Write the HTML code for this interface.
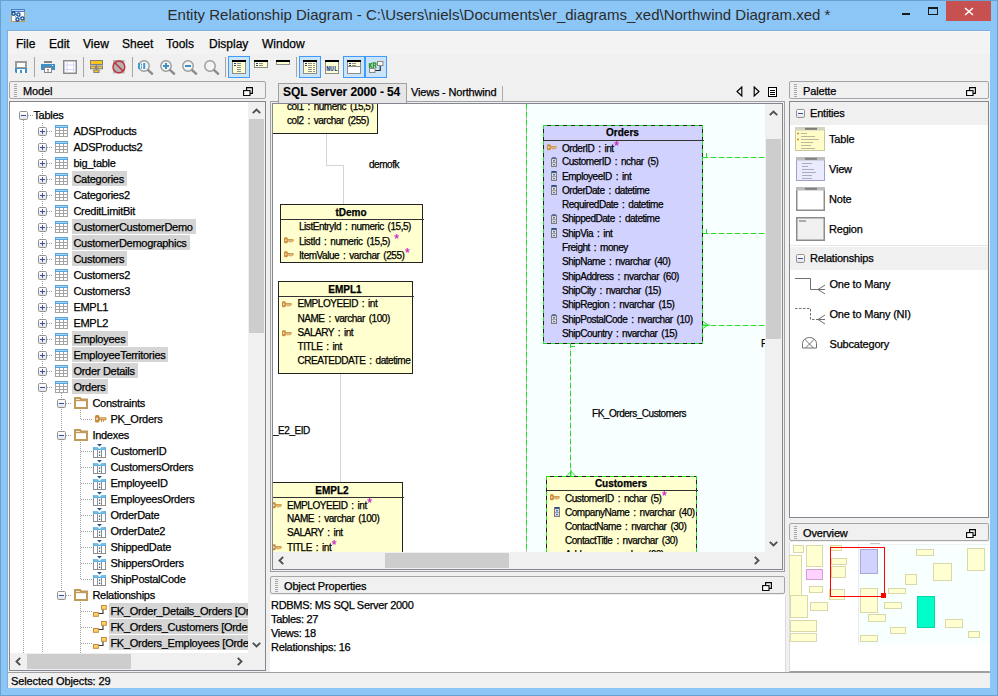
<!DOCTYPE html><html><head><meta charset="utf-8"><style>*{margin:0;padding:0;box-sizing:content-box}
html,body{width:998px;height:696px;overflow:hidden;background:#8cc6f6}
.a{position:absolute}
.t{white-space:pre;font-family:"Liberation Sans",sans-serif;-webkit-text-stroke:0.25px currentColor}
.tr{font-size:11px;line-height:16px;letter-spacing:-0.27px;color:#000}
.dt{font-size:10px;line-height:12px;letter-spacing:-0.46px;word-spacing:1.6px;color:#000}
.pt{font-size:11px;line-height:16px;letter-spacing:-0.2px;color:#000}
</style></head><body>
<div class="a" style="left:0;top:0;width:996px;height:694px;border:1px solid #6b9fd0;background:#8cc6f6"></div>
<svg class="a" style="left:11px;top:9px" width="14" height="13" viewBox="0 0 14 13">
<rect x="0.5" y="0.5" width="13" height="12" fill="#f2f9ff" stroke="#c49a52"/>
<rect x="0" y="0" width="14" height="3" fill="#4f7fbf"/><rect x="1" y="1" width="12" height="1" fill="#a8d4fa"/>
<path d="M2.5 4.5 L11.4 9.4 M2.5 4.5 L6.5 10.5" stroke="#2b5a9a" stroke-width="0.8" stroke-dasharray="0.8 0.8"/>
<circle cx="2.6" cy="4.6" r="1.6" fill="#fff" stroke="#0d4a94" stroke-width="1.3"/>
<circle cx="7.4" cy="5.5" r="1.6" fill="#fff" stroke="#0d4a94" stroke-width="1.3"/>
<circle cx="6.5" cy="10.4" r="1.6" fill="#fff" stroke="#0d4a94" stroke-width="1.3"/>
<circle cx="11.4" cy="9.4" r="1.6" fill="#fff" stroke="#0d4a94" stroke-width="1.3"/>
</svg>
<div class="a t" style="left:0;top:5px;width:998px;text-align:center;font-size:15px;line-height:20px;color:#2b2b2b;-webkit-text-stroke:0">Entity Relationship Diagram - C:\Users\niels\Documents\er_diagrams_xed\Northwind Diagram.xed *</div>
<div class="a" style="left:902px;top:13px;width:8px;height:2px;background:#1a1a1a"></div>
<div class="a" style="left:928px;top:7px;width:8px;height:5px;border:1px solid #1a1a1a;border-top-width:2px"></div>
<div class="a" style="left:946px;top:1px;width:45px;height:20px;background:#c75050"></div>
<svg class="a" style="left:964px;top:7px" width="10" height="9" viewBox="0 0 10 9"><path d="M1 1 L9 8 M9 1 L1 8" stroke="#fff" stroke-width="1.5"/></svg>
<div class="a" style="left:7px;top:30px;width:982px;height:657px;background:#f0f0f0;border-left:1px solid #7eaedb;border-top:1px solid #7eaedb"></div>
<div class="a" style="left:8px;top:31px;width:982px;height:23px;background:#f3f3f3;border-top:1px solid #f9f9f9;box-sizing:border-box"></div>
<div class="a t" style="left:16px;top:36px;font-size:12px;line-height:16px;color:#000">File</div>
<div class="a t" style="left:49px;top:36px;font-size:12px;line-height:16px;color:#000">Edit</div>
<div class="a t" style="left:83px;top:36px;font-size:12px;line-height:16px;color:#000">View</div>
<div class="a t" style="left:122px;top:36px;font-size:12px;line-height:16px;color:#000">Sheet</div>
<div class="a t" style="left:166px;top:36px;font-size:12px;line-height:16px;color:#000">Tools</div>
<div class="a t" style="left:209px;top:36px;font-size:12px;line-height:16px;color:#000">Display</div>
<div class="a t" style="left:262px;top:36px;font-size:12px;line-height:16px;color:#000">Window</div>
<svg class="a" style="left:15px;top:61px" width="12" height="12" viewBox="0 0 12 12">
<path d="M0 0 H12 V12 H1 L0 11 Z" fill="#9b9b9b"/><rect x="0" y="7" width="12" height="5" fill="#3f8fc7"/><path d="M0 11 L1 12 H0Z" fill="#f0f0f0"/>
<rect x="2" y="2" width="8" height="4" fill="#fff"/><rect x="2" y="8" width="8" height="4" fill="#fff"/><rect x="5" y="9" width="2" height="3" fill="#3f8fc7"/></svg>
<div class="a" style="left:34px;top:57px;width:1px;height:20px;background:#a6a6a6"></div>
<svg class="a" style="left:41px;top:61px" width="14" height="12" viewBox="0 0 14 12">
<rect x="3" y="0" width="8" height="2" fill="#858585"/><rect x="0" y="3" width="14" height="6" fill="#3f8fc7"/><rect x="11" y="4" width="1" height="1" fill="#fff"/>
<rect x="3.5" y="6.5" width="7" height="5" fill="#fff" stroke="#858585"/><path d="M6 8.5 H8 M6 10 H8" stroke="#858585"/></svg>
<svg class="a" style="left:63px;top:60px" width="14" height="14" viewBox="0 0 14 14">
<rect x="0.75" y="0.75" width="12.5" height="12.5" fill="#fff" stroke="#8a8a8a" stroke-width="1.5"/>
<path d="M4 1.5 V12.5 M10.5 1.5 V12.5 M1.5 5 H12.5 M1.5 9.5 H12.5" stroke="#d6d6ff" stroke-width="1"/></svg>
<div class="a" style="left:83px;top:57px;width:1px;height:20px;background:#a6a6a6"></div>
<svg class="a" style="left:90px;top:60px" width="13" height="13" viewBox="0 0 13 13">
<path d="M6.5 4 V10.5" stroke="#808080" stroke-width="1.2"/>
<rect x="0.5" y="0.5" width="12" height="4" fill="#fdc21e" stroke="#808080"/>
<rect x="0.5" y="6" width="5" height="2.8" fill="#fdc21e" stroke="#808080"/>
<rect x="7.8" y="6" width="4.7" height="2.8" fill="#fdc21e" stroke="#808080"/>
<rect x="3.8" y="10" width="5.2" height="2.6" fill="#fdc21e" stroke="#808080"/></svg>
<svg class="a" style="left:112px;top:60px" width="14" height="14" viewBox="0 0 14 14">
<rect x="1" y="0" width="11.5" height="13.5" fill="#b4b4b4"/>
<circle cx="6.9" cy="6.9" r="5.9" fill="#b4b4b4" stroke="#c2303a" stroke-width="1.5"/>
<path d="M2.8 2.8 L11 11" stroke="#c2303a" stroke-width="1.5"/></svg>
<div class="a" style="left:132px;top:57px;width:1px;height:20px;background:#a6a6a6"></div>
<svg class="a" style="left:137px;top:59px" width="17" height="17" viewBox="0 0 17 17">
<circle cx="7" cy="7" r="5.2" fill="#fff" fill-opacity="0.3" stroke="#9a9a9a" stroke-width="1.4"/>
<path d="M10.6 10.6 L15.8 15.3" stroke="#8a8a8a" stroke-width="2.4"/><rect x="1" y="4" width="2" height="6" fill="#3f9ad0"/><rect x="4" y="4.6" width="1" height="2" fill="#3f9ad0"/><rect x="4" y="7.4" width="1" height="2" fill="#3f9ad0"/><rect x="6.2" y="4" width="2" height="6" fill="#3f9ad0"/></svg>
<svg class="a" style="left:159px;top:59px" width="17" height="17" viewBox="0 0 17 17">
<circle cx="7" cy="7" r="5.2" fill="#fff" fill-opacity="0.3" stroke="#9a9a9a" stroke-width="1.4"/>
<path d="M10.6 10.6 L15.8 15.3" stroke="#8a8a8a" stroke-width="2.4"/><path d="M4 7 H10 M7 4 V10" stroke="#3f8fc7" stroke-width="2"/></svg>
<svg class="a" style="left:181px;top:59px" width="17" height="17" viewBox="0 0 17 17">
<circle cx="7" cy="7" r="5.2" fill="#fff" fill-opacity="0.3" stroke="#9a9a9a" stroke-width="1.4"/>
<path d="M10.6 10.6 L15.8 15.3" stroke="#8a8a8a" stroke-width="2.4"/><path d="M4 7 H10" stroke="#3f8fc7" stroke-width="2"/></svg>
<svg class="a" style="left:203px;top:59px" width="17" height="17" viewBox="0 0 17 17">
<circle cx="7" cy="7" r="5.2" fill="#fff" fill-opacity="0.3" stroke="#9a9a9a" stroke-width="1.4"/>
<path d="M10.6 10.6 L15.8 15.3" stroke="#8a8a8a" stroke-width="2.4"/></svg>
<div class="a" style="left:225px;top:57px;width:1px;height:20px;background:#a6a6a6"></div>
<div class="a" style="left:228px;top:56px;width:20px;height:20px;border:1px solid #3e9bff;background:#cce4f7"></div>
<svg class="a" style="left:232px;top:60px" width="14" height="14" viewBox="0 0 14 14"><rect x="0.5" y="0.5" width="13" height="13" fill="#ffffd4" stroke="#8c8c8c"/><rect x="0" y="0" width="14" height="2" fill="#000"/><path d="M2 3.5 H4" stroke="#1a3f8c" stroke-width="1"/><path d="M5 3.5 H9" stroke="#909090" stroke-width="1"/><path d="M2 5.5 H4" stroke="#1a3f8c" stroke-width="1"/><path d="M5 5.5 H9" stroke="#909090" stroke-width="1"/><path d="M5 7.5 H9" stroke="#909090" stroke-width="1"/><path d="M5 9.5 H9" stroke="#909090" stroke-width="1"/><path d="M5 11.5 H9" stroke="#909090" stroke-width="1"/></svg>
<svg class="a" style="left:254px;top:60px" width="14" height="8" viewBox="0 0 14 8"><rect x="0.5" y="0.5" width="13" height="7" fill="#ffffd4" stroke="#8c8c8c"/><rect x="0" y="0" width="14" height="2" fill="#000"/><path d="M2 3.5 H4" stroke="#1a3f8c" stroke-width="1"/><path d="M5 3.5 H9" stroke="#909090" stroke-width="1"/><path d="M2 5.5 H4" stroke="#1a3f8c" stroke-width="1"/><path d="M5 5.5 H9" stroke="#909090" stroke-width="1"/></svg>
<svg class="a" style="left:276px;top:60px" width="14" height="5" viewBox="0 0 14 5"><rect x="0.5" y="0.5" width="13" height="4" fill="#ffffd4" stroke="#8c8c8c"/><rect x="0" y="0" width="14" height="2" fill="#000"/></svg>
<div class="a" style="left:296px;top:57px;width:1px;height:20px;background:#a6a6a6"></div>
<div class="a" style="left:299px;top:56px;width:20px;height:20px;border:1px solid #3e9bff;background:#cce4f7"></div>
<svg class="a" style="left:303px;top:60px" width="14" height="14" viewBox="0 0 14 14"><rect x="0.5" y="0.5" width="13" height="13" fill="#ffffd4" stroke="#8c8c8c"/><rect x="0" y="0" width="14" height="2" fill="#000"/><path d="M2 3.5 H4" stroke="#1a3f8c" stroke-width="1"/><path d="M5 3.5 H9" stroke="#909090" stroke-width="1"/><path d="M10 3.5 H12" stroke="#909090" stroke-width="1"/><path d="M2 5.5 H4" stroke="#1a3f8c" stroke-width="1"/><path d="M5 5.5 H9" stroke="#909090" stroke-width="1"/><path d="M10 5.5 H12" stroke="#909090" stroke-width="1"/><path d="M5 7.5 H9" stroke="#909090" stroke-width="1"/><path d="M10 7.5 H12" stroke="#909090" stroke-width="1"/><path d="M5 9.5 H9" stroke="#909090" stroke-width="1"/><path d="M10 9.5 H12" stroke="#909090" stroke-width="1"/><path d="M5 11.5 H9" stroke="#909090" stroke-width="1"/><path d="M10 11.5 H12" stroke="#909090" stroke-width="1"/></svg>
<svg class="a" style="left:325px;top:60px" width="14" height="14" viewBox="0 0 14 14"><rect x="0.5" y="0.5" width="13" height="13" fill="#ffffd4" stroke="#8c8c8c"/><rect x="0" y="0" width="14" height="2" fill="#000"/><text x="7" y="10.5" text-anchor="middle" font-family="Liberation Mono" font-weight="bold" font-size="6.5" fill="#1a3f8c">NUL</text></svg>
<div class="a" style="left:343px;top:56px;width:20px;height:20px;border:1px solid #3e9bff;background:#cce4f7"></div>
<svg class="a" style="left:347px;top:60px" width="14" height="14" viewBox="0 0 14 14"><rect x="0.5" y="0.5" width="13" height="13" fill="#ffffd4" stroke="#8c8c8c"/><rect x="1" y="7" width="12" height="6" fill="#fff"/><path d="M1 6.5 H13" stroke="#8c8c8c"/><rect x="0" y="0" width="14" height="2" fill="#000"/><path d="M2 3.5 H4" stroke="#1a3f8c" stroke-width="1"/><path d="M5 3.5 H9" stroke="#909090" stroke-width="1"/><path d="M2 5.5 H4" stroke="#1a3f8c" stroke-width="1"/><path d="M5 5.5 H9" stroke="#909090" stroke-width="1"/></svg>
<div class="a" style="left:365px;top:56px;width:20px;height:20px;border:1px solid #3e9bff;background:#cce4f7"></div>
<svg class="a" style="left:368px;top:60px" width="16" height="14" viewBox="0 0 16 14">
<path d="M12.2 5.5 V10.5 H6.5" stroke="#2a2a2a" stroke-width="1.2" fill="none"/>
<path d="M1.5 3 V8 M1.5 5.5 L4 3 M2.2 5.2 L4 8 M5.3 8 V3 H7.2 Q8 3 8 4.2 Q8 5.3 7 5.3 H5.3 M6.8 5.3 L8.2 8" fill="none" stroke="#2e962e" stroke-width="1.3"/>
<rect x="9.5" y="1.5" width="5.5" height="4" fill="#f4f4f4" stroke="#8a8a8a"/>
<rect x="1.5" y="8.5" width="5.5" height="4" fill="#f4f4f4" stroke="#8a8a8a"/></svg>
<div class="a" style="left:9px;top:81px;width:255px;height:16px;border:1px solid #a5a5a5;border-radius:2px;background:#f0f0f0"></div>
<div class="a" style="left:14px;top:84px;width:3px;height:13px;background:repeating-linear-gradient(#a8a8a8 0 1px,transparent 1px 2px)"></div>
<div class="a t" style="left:23px;top:83px;font-size:11px;letter-spacing:-0.15px;line-height:16px;color:#000">Model</div>
<svg class="a" style="left:243px;top:87px" width="11" height="9" viewBox="0 0 11 9"><path d="M3.6 3 V0.6 H9.4 V6.4 H7" fill="none" stroke="#000" stroke-width="1.1"/><rect x="0.6" y="3.6" width="6.4" height="5" fill="#fff" stroke="#000" stroke-width="1.1"/></svg>
<div class="a" style="left:9px;top:101px;width:255px;height:568px;border:1px solid #828790;background:#fff"></div>
<div class="a" style="left:270px;top:101px;width:513px;height:469px;border:1px solid #a0a0a0"></div>
<div class="a" style="left:272px;top:103px;width:509px;height:465px;border:1px solid #828790;background:#fff"></div>
<div class="a" style="left:270px;top:576px;width:513px;height:16px;border:1px solid #a5a5a5;border-radius:2px;background:#f0f0f0"></div>
<div class="a" style="left:275px;top:579px;width:3px;height:13px;background:repeating-linear-gradient(#a8a8a8 0 1px,transparent 1px 2px)"></div>
<div class="a t" style="left:284px;top:578px;font-size:11px;letter-spacing:-0.15px;line-height:16px;color:#000">Object Properties</div>
<svg class="a" style="left:762px;top:582px" width="11" height="9" viewBox="0 0 11 9"><path d="M3.6 3 V0.6 H9.4 V6.4 H7" fill="none" stroke="#000" stroke-width="1.1"/><rect x="0.6" y="3.6" width="6.4" height="5" fill="#fff" stroke="#000" stroke-width="1.1"/></svg>
<div class="a" style="left:270px;top:595px;width:514px;height:76px;border:1px solid #a0a0a0;border-left-color:#fff;border-top-color:#fff;border-right-color:#dcdcdc;background:#fff"></div>
<div class="a" style="left:789px;top:81px;width:198px;height:16px;border:1px solid #a5a5a5;border-radius:2px;background:#f0f0f0"></div>
<div class="a" style="left:794px;top:84px;width:3px;height:13px;background:repeating-linear-gradient(#a8a8a8 0 1px,transparent 1px 2px)"></div>
<div class="a t" style="left:803px;top:83px;font-size:11px;letter-spacing:-0.15px;line-height:16px;color:#000">Palette</div>
<svg class="a" style="left:966px;top:87px" width="11" height="9" viewBox="0 0 11 9"><path d="M3.6 3 V0.6 H9.4 V6.4 H7" fill="none" stroke="#000" stroke-width="1.1"/><rect x="0.6" y="3.6" width="6.4" height="5" fill="#fff" stroke="#000" stroke-width="1.1"/></svg>
<div class="a" style="left:789px;top:101px;width:198px;height:415px;border:1px solid #828790;background:#fff"></div>
<div class="a" style="left:789px;top:523px;width:198px;height:16px;border:1px solid #a5a5a5;border-radius:2px;background:#f0f0f0"></div>
<div class="a" style="left:794px;top:526px;width:3px;height:13px;background:repeating-linear-gradient(#a8a8a8 0 1px,transparent 1px 2px)"></div>
<div class="a t" style="left:803px;top:525px;font-size:11px;letter-spacing:-0.15px;line-height:16px;color:#000">Overview</div>
<svg class="a" style="left:966px;top:529px" width="11" height="9" viewBox="0 0 11 9"><path d="M3.6 3 V0.6 H9.4 V6.4 H7" fill="none" stroke="#000" stroke-width="1.1"/><rect x="0.6" y="3.6" width="6.4" height="5" fill="#fff" stroke="#000" stroke-width="1.1"/></svg>
<div class="a" style="left:789px;top:542px;width:200px;height:129px;border-bottom:1px solid #a0a0a0;border-left:1px solid #dcdcdc;background:#fff"></div>
<div class="a" style="left:8px;top:672px;width:982px;height:1px;background:#a0a0a0"></div>
<div class="a t" style="left:11px;top:674px;font-size:11px;letter-spacing:-0.1px;line-height:14px;color:#000">Selected Objects: 29</div>
<div class="a" style="left:10px;top:102px;width:238px;height:551px;overflow:hidden">
<div class="a" style="left:13px;top:18px;width:1px;height:534px;background:repeating-linear-gradient(#a0a0a0 0 1px,transparent 1px 2px)"></div>
<div class="a" style="left:32px;top:21px;width:1px;height:531px;background:repeating-linear-gradient(#a0a0a0 0 1px,transparent 1px 2px)"></div>
<div class="a" style="left:51px;top:291px;width:1px;height:198px;background:repeating-linear-gradient(#a0a0a0 0 1px,transparent 1px 2px)"></div>
<div class="a" style="left:70px;top:308px;width:1px;height:10px;background:repeating-linear-gradient(#a0a0a0 0 1px,transparent 1px 2px)"></div>
<div class="a" style="left:70px;top:340px;width:1px;height:138px;background:repeating-linear-gradient(#a0a0a0 0 1px,transparent 1px 2px)"></div>
<div class="a" style="left:70px;top:500px;width:1px;height:52px;background:repeating-linear-gradient(#a0a0a0 0 1px,transparent 1px 2px)"></div>
<div class="a" style="left:18px;top:13px;width:6px;height:1px;background:repeating-linear-gradient(90deg,#a0a0a0 0 1px,transparent 1px 2px)"></div>
<svg class="a" style="left:9px;top:9px" width="9" height="9" viewBox="0 0 9 9"><defs><linearGradient id="bg" x1="0" y1="0" x2="0" y2="1"><stop offset="0" stop-color="#fff"/><stop offset="1" stop-color="#e3e3e3"/></linearGradient></defs><rect x="0.5" y="0.5" width="8" height="8" rx="1.2" fill="url(#bg)" stroke="#919191"/><path d="M2 4.5 H7" stroke="#3b4fa8" stroke-width="1"/></svg>
<div class="a t tr" style="left:23.4px;top:5px">Tables</div>
<div class="a" style="left:37px;top:29px;width:6px;height:1px;background:repeating-linear-gradient(90deg,#a0a0a0 0 1px,transparent 1px 2px)"></div>
<svg class="a" style="left:28px;top:25px" width="9" height="9" viewBox="0 0 9 9"><defs><linearGradient id="bg" x1="0" y1="0" x2="0" y2="1"><stop offset="0" stop-color="#fff"/><stop offset="1" stop-color="#e3e3e3"/></linearGradient></defs><rect x="0.5" y="0.5" width="8" height="8" rx="1.2" fill="url(#bg)" stroke="#919191"/><path d="M2 4.5 H7" stroke="#3b4fa8" stroke-width="1"/><path d="M4.5 2 V7" stroke="#3b4fa8" stroke-width="1"/></svg>
<svg class="a" style="left:45px;top:23px" width="13" height="12" viewBox="0 0 13 12"><rect x="0.5" y="0.5" width="12" height="11" fill="#fff" stroke="#a3a3a3"/><path d="M0.5 5.5 H12.5 M0.5 8.5 H12.5 M4.5 3 V11.5 M8.5 3 V11.5" stroke="#a3a3a3"/><rect x="0" y="0" width="13" height="3" fill="#54a4dc"/><rect x="1" y="1" width="11" height="1" fill="#a9d8f5"/></svg>
<div class="a t tr" style="left:63.400000000000006px;top:21px">ADSProducts</div>
<div class="a" style="left:37px;top:45px;width:6px;height:1px;background:repeating-linear-gradient(90deg,#a0a0a0 0 1px,transparent 1px 2px)"></div>
<svg class="a" style="left:28px;top:41px" width="9" height="9" viewBox="0 0 9 9"><defs><linearGradient id="bg" x1="0" y1="0" x2="0" y2="1"><stop offset="0" stop-color="#fff"/><stop offset="1" stop-color="#e3e3e3"/></linearGradient></defs><rect x="0.5" y="0.5" width="8" height="8" rx="1.2" fill="url(#bg)" stroke="#919191"/><path d="M2 4.5 H7" stroke="#3b4fa8" stroke-width="1"/><path d="M4.5 2 V7" stroke="#3b4fa8" stroke-width="1"/></svg>
<svg class="a" style="left:45px;top:39px" width="13" height="12" viewBox="0 0 13 12"><rect x="0.5" y="0.5" width="12" height="11" fill="#fff" stroke="#a3a3a3"/><path d="M0.5 5.5 H12.5 M0.5 8.5 H12.5 M4.5 3 V11.5 M8.5 3 V11.5" stroke="#a3a3a3"/><rect x="0" y="0" width="13" height="3" fill="#54a4dc"/><rect x="1" y="1" width="11" height="1" fill="#a9d8f5"/></svg>
<div class="a t tr" style="left:63.400000000000006px;top:37px">ADSProducts2</div>
<div class="a" style="left:37px;top:61px;width:6px;height:1px;background:repeating-linear-gradient(90deg,#a0a0a0 0 1px,transparent 1px 2px)"></div>
<svg class="a" style="left:28px;top:57px" width="9" height="9" viewBox="0 0 9 9"><defs><linearGradient id="bg" x1="0" y1="0" x2="0" y2="1"><stop offset="0" stop-color="#fff"/><stop offset="1" stop-color="#e3e3e3"/></linearGradient></defs><rect x="0.5" y="0.5" width="8" height="8" rx="1.2" fill="url(#bg)" stroke="#919191"/><path d="M2 4.5 H7" stroke="#3b4fa8" stroke-width="1"/><path d="M4.5 2 V7" stroke="#3b4fa8" stroke-width="1"/></svg>
<svg class="a" style="left:45px;top:55px" width="13" height="12" viewBox="0 0 13 12"><rect x="0.5" y="0.5" width="12" height="11" fill="#fff" stroke="#a3a3a3"/><path d="M0.5 5.5 H12.5 M0.5 8.5 H12.5 M4.5 3 V11.5 M8.5 3 V11.5" stroke="#a3a3a3"/><rect x="0" y="0" width="13" height="3" fill="#54a4dc"/><rect x="1" y="1" width="11" height="1" fill="#a9d8f5"/></svg>
<div class="a t tr" style="left:63.400000000000006px;top:53px">big_table</div>
<div class="a" style="left:37px;top:77px;width:6px;height:1px;background:repeating-linear-gradient(90deg,#a0a0a0 0 1px,transparent 1px 2px)"></div>
<svg class="a" style="left:28px;top:73px" width="9" height="9" viewBox="0 0 9 9"><defs><linearGradient id="bg" x1="0" y1="0" x2="0" y2="1"><stop offset="0" stop-color="#fff"/><stop offset="1" stop-color="#e3e3e3"/></linearGradient></defs><rect x="0.5" y="0.5" width="8" height="8" rx="1.2" fill="url(#bg)" stroke="#919191"/><path d="M2 4.5 H7" stroke="#3b4fa8" stroke-width="1"/><path d="M4.5 2 V7" stroke="#3b4fa8" stroke-width="1"/></svg>
<svg class="a" style="left:45px;top:71px" width="13" height="12" viewBox="0 0 13 12"><rect x="0.5" y="0.5" width="12" height="11" fill="#fff" stroke="#a3a3a3"/><path d="M0.5 5.5 H12.5 M0.5 8.5 H12.5 M4.5 3 V11.5 M8.5 3 V11.5" stroke="#a3a3a3"/><rect x="0" y="0" width="13" height="3" fill="#54a4dc"/><rect x="1" y="1" width="11" height="1" fill="#a9d8f5"/></svg>
<div class="a t tr" style="left:62.400000000000006px;top:69px;padding:0 3px 0 1px;height:15px;background:#d5d5d5">Categories</div>
<div class="a" style="left:37px;top:93px;width:6px;height:1px;background:repeating-linear-gradient(90deg,#a0a0a0 0 1px,transparent 1px 2px)"></div>
<svg class="a" style="left:28px;top:89px" width="9" height="9" viewBox="0 0 9 9"><defs><linearGradient id="bg" x1="0" y1="0" x2="0" y2="1"><stop offset="0" stop-color="#fff"/><stop offset="1" stop-color="#e3e3e3"/></linearGradient></defs><rect x="0.5" y="0.5" width="8" height="8" rx="1.2" fill="url(#bg)" stroke="#919191"/><path d="M2 4.5 H7" stroke="#3b4fa8" stroke-width="1"/><path d="M4.5 2 V7" stroke="#3b4fa8" stroke-width="1"/></svg>
<svg class="a" style="left:45px;top:87px" width="13" height="12" viewBox="0 0 13 12"><rect x="0.5" y="0.5" width="12" height="11" fill="#fff" stroke="#a3a3a3"/><path d="M0.5 5.5 H12.5 M0.5 8.5 H12.5 M4.5 3 V11.5 M8.5 3 V11.5" stroke="#a3a3a3"/><rect x="0" y="0" width="13" height="3" fill="#54a4dc"/><rect x="1" y="1" width="11" height="1" fill="#a9d8f5"/></svg>
<div class="a t tr" style="left:63.400000000000006px;top:85px">Categories2</div>
<div class="a" style="left:37px;top:109px;width:6px;height:1px;background:repeating-linear-gradient(90deg,#a0a0a0 0 1px,transparent 1px 2px)"></div>
<svg class="a" style="left:28px;top:105px" width="9" height="9" viewBox="0 0 9 9"><defs><linearGradient id="bg" x1="0" y1="0" x2="0" y2="1"><stop offset="0" stop-color="#fff"/><stop offset="1" stop-color="#e3e3e3"/></linearGradient></defs><rect x="0.5" y="0.5" width="8" height="8" rx="1.2" fill="url(#bg)" stroke="#919191"/><path d="M2 4.5 H7" stroke="#3b4fa8" stroke-width="1"/><path d="M4.5 2 V7" stroke="#3b4fa8" stroke-width="1"/></svg>
<svg class="a" style="left:45px;top:103px" width="13" height="12" viewBox="0 0 13 12"><rect x="0.5" y="0.5" width="12" height="11" fill="#fff" stroke="#a3a3a3"/><path d="M0.5 5.5 H12.5 M0.5 8.5 H12.5 M4.5 3 V11.5 M8.5 3 V11.5" stroke="#a3a3a3"/><rect x="0" y="0" width="13" height="3" fill="#54a4dc"/><rect x="1" y="1" width="11" height="1" fill="#a9d8f5"/></svg>
<div class="a t tr" style="left:63.400000000000006px;top:101px">CreditLimitBit</div>
<div class="a" style="left:37px;top:125px;width:6px;height:1px;background:repeating-linear-gradient(90deg,#a0a0a0 0 1px,transparent 1px 2px)"></div>
<svg class="a" style="left:28px;top:121px" width="9" height="9" viewBox="0 0 9 9"><defs><linearGradient id="bg" x1="0" y1="0" x2="0" y2="1"><stop offset="0" stop-color="#fff"/><stop offset="1" stop-color="#e3e3e3"/></linearGradient></defs><rect x="0.5" y="0.5" width="8" height="8" rx="1.2" fill="url(#bg)" stroke="#919191"/><path d="M2 4.5 H7" stroke="#3b4fa8" stroke-width="1"/><path d="M4.5 2 V7" stroke="#3b4fa8" stroke-width="1"/></svg>
<svg class="a" style="left:45px;top:119px" width="13" height="12" viewBox="0 0 13 12"><rect x="0.5" y="0.5" width="12" height="11" fill="#fff" stroke="#a3a3a3"/><path d="M0.5 5.5 H12.5 M0.5 8.5 H12.5 M4.5 3 V11.5 M8.5 3 V11.5" stroke="#a3a3a3"/><rect x="0" y="0" width="13" height="3" fill="#54a4dc"/><rect x="1" y="1" width="11" height="1" fill="#a9d8f5"/></svg>
<div class="a t tr" style="left:62.400000000000006px;top:117px;padding:0 3px 0 1px;height:15px;background:#d5d5d5">CustomerCustomerDemo</div>
<div class="a" style="left:37px;top:141px;width:6px;height:1px;background:repeating-linear-gradient(90deg,#a0a0a0 0 1px,transparent 1px 2px)"></div>
<svg class="a" style="left:28px;top:137px" width="9" height="9" viewBox="0 0 9 9"><defs><linearGradient id="bg" x1="0" y1="0" x2="0" y2="1"><stop offset="0" stop-color="#fff"/><stop offset="1" stop-color="#e3e3e3"/></linearGradient></defs><rect x="0.5" y="0.5" width="8" height="8" rx="1.2" fill="url(#bg)" stroke="#919191"/><path d="M2 4.5 H7" stroke="#3b4fa8" stroke-width="1"/><path d="M4.5 2 V7" stroke="#3b4fa8" stroke-width="1"/></svg>
<svg class="a" style="left:45px;top:135px" width="13" height="12" viewBox="0 0 13 12"><rect x="0.5" y="0.5" width="12" height="11" fill="#fff" stroke="#a3a3a3"/><path d="M0.5 5.5 H12.5 M0.5 8.5 H12.5 M4.5 3 V11.5 M8.5 3 V11.5" stroke="#a3a3a3"/><rect x="0" y="0" width="13" height="3" fill="#54a4dc"/><rect x="1" y="1" width="11" height="1" fill="#a9d8f5"/></svg>
<div class="a t tr" style="left:62.400000000000006px;top:133px;padding:0 3px 0 1px;height:15px;background:#d5d5d5">CustomerDemographics</div>
<div class="a" style="left:37px;top:157px;width:6px;height:1px;background:repeating-linear-gradient(90deg,#a0a0a0 0 1px,transparent 1px 2px)"></div>
<svg class="a" style="left:28px;top:153px" width="9" height="9" viewBox="0 0 9 9"><defs><linearGradient id="bg" x1="0" y1="0" x2="0" y2="1"><stop offset="0" stop-color="#fff"/><stop offset="1" stop-color="#e3e3e3"/></linearGradient></defs><rect x="0.5" y="0.5" width="8" height="8" rx="1.2" fill="url(#bg)" stroke="#919191"/><path d="M2 4.5 H7" stroke="#3b4fa8" stroke-width="1"/><path d="M4.5 2 V7" stroke="#3b4fa8" stroke-width="1"/></svg>
<svg class="a" style="left:45px;top:151px" width="13" height="12" viewBox="0 0 13 12"><rect x="0.5" y="0.5" width="12" height="11" fill="#fff" stroke="#a3a3a3"/><path d="M0.5 5.5 H12.5 M0.5 8.5 H12.5 M4.5 3 V11.5 M8.5 3 V11.5" stroke="#a3a3a3"/><rect x="0" y="0" width="13" height="3" fill="#54a4dc"/><rect x="1" y="1" width="11" height="1" fill="#a9d8f5"/></svg>
<div class="a t tr" style="left:62.400000000000006px;top:149px;padding:0 3px 0 1px;height:15px;background:#d5d5d5">Customers</div>
<div class="a" style="left:37px;top:173px;width:6px;height:1px;background:repeating-linear-gradient(90deg,#a0a0a0 0 1px,transparent 1px 2px)"></div>
<svg class="a" style="left:28px;top:169px" width="9" height="9" viewBox="0 0 9 9"><defs><linearGradient id="bg" x1="0" y1="0" x2="0" y2="1"><stop offset="0" stop-color="#fff"/><stop offset="1" stop-color="#e3e3e3"/></linearGradient></defs><rect x="0.5" y="0.5" width="8" height="8" rx="1.2" fill="url(#bg)" stroke="#919191"/><path d="M2 4.5 H7" stroke="#3b4fa8" stroke-width="1"/><path d="M4.5 2 V7" stroke="#3b4fa8" stroke-width="1"/></svg>
<svg class="a" style="left:45px;top:167px" width="13" height="12" viewBox="0 0 13 12"><rect x="0.5" y="0.5" width="12" height="11" fill="#fff" stroke="#a3a3a3"/><path d="M0.5 5.5 H12.5 M0.5 8.5 H12.5 M4.5 3 V11.5 M8.5 3 V11.5" stroke="#a3a3a3"/><rect x="0" y="0" width="13" height="3" fill="#54a4dc"/><rect x="1" y="1" width="11" height="1" fill="#a9d8f5"/></svg>
<div class="a t tr" style="left:63.400000000000006px;top:165px">Customers2</div>
<div class="a" style="left:37px;top:189px;width:6px;height:1px;background:repeating-linear-gradient(90deg,#a0a0a0 0 1px,transparent 1px 2px)"></div>
<svg class="a" style="left:28px;top:185px" width="9" height="9" viewBox="0 0 9 9"><defs><linearGradient id="bg" x1="0" y1="0" x2="0" y2="1"><stop offset="0" stop-color="#fff"/><stop offset="1" stop-color="#e3e3e3"/></linearGradient></defs><rect x="0.5" y="0.5" width="8" height="8" rx="1.2" fill="url(#bg)" stroke="#919191"/><path d="M2 4.5 H7" stroke="#3b4fa8" stroke-width="1"/><path d="M4.5 2 V7" stroke="#3b4fa8" stroke-width="1"/></svg>
<svg class="a" style="left:45px;top:183px" width="13" height="12" viewBox="0 0 13 12"><rect x="0.5" y="0.5" width="12" height="11" fill="#fff" stroke="#a3a3a3"/><path d="M0.5 5.5 H12.5 M0.5 8.5 H12.5 M4.5 3 V11.5 M8.5 3 V11.5" stroke="#a3a3a3"/><rect x="0" y="0" width="13" height="3" fill="#54a4dc"/><rect x="1" y="1" width="11" height="1" fill="#a9d8f5"/></svg>
<div class="a t tr" style="left:63.400000000000006px;top:181px">Customers3</div>
<div class="a" style="left:37px;top:205px;width:6px;height:1px;background:repeating-linear-gradient(90deg,#a0a0a0 0 1px,transparent 1px 2px)"></div>
<svg class="a" style="left:28px;top:201px" width="9" height="9" viewBox="0 0 9 9"><defs><linearGradient id="bg" x1="0" y1="0" x2="0" y2="1"><stop offset="0" stop-color="#fff"/><stop offset="1" stop-color="#e3e3e3"/></linearGradient></defs><rect x="0.5" y="0.5" width="8" height="8" rx="1.2" fill="url(#bg)" stroke="#919191"/><path d="M2 4.5 H7" stroke="#3b4fa8" stroke-width="1"/><path d="M4.5 2 V7" stroke="#3b4fa8" stroke-width="1"/></svg>
<svg class="a" style="left:45px;top:199px" width="13" height="12" viewBox="0 0 13 12"><rect x="0.5" y="0.5" width="12" height="11" fill="#fff" stroke="#a3a3a3"/><path d="M0.5 5.5 H12.5 M0.5 8.5 H12.5 M4.5 3 V11.5 M8.5 3 V11.5" stroke="#a3a3a3"/><rect x="0" y="0" width="13" height="3" fill="#54a4dc"/><rect x="1" y="1" width="11" height="1" fill="#a9d8f5"/></svg>
<div class="a t tr" style="left:63.400000000000006px;top:197px">EMPL1</div>
<div class="a" style="left:37px;top:221px;width:6px;height:1px;background:repeating-linear-gradient(90deg,#a0a0a0 0 1px,transparent 1px 2px)"></div>
<svg class="a" style="left:28px;top:217px" width="9" height="9" viewBox="0 0 9 9"><defs><linearGradient id="bg" x1="0" y1="0" x2="0" y2="1"><stop offset="0" stop-color="#fff"/><stop offset="1" stop-color="#e3e3e3"/></linearGradient></defs><rect x="0.5" y="0.5" width="8" height="8" rx="1.2" fill="url(#bg)" stroke="#919191"/><path d="M2 4.5 H7" stroke="#3b4fa8" stroke-width="1"/><path d="M4.5 2 V7" stroke="#3b4fa8" stroke-width="1"/></svg>
<svg class="a" style="left:45px;top:215px" width="13" height="12" viewBox="0 0 13 12"><rect x="0.5" y="0.5" width="12" height="11" fill="#fff" stroke="#a3a3a3"/><path d="M0.5 5.5 H12.5 M0.5 8.5 H12.5 M4.5 3 V11.5 M8.5 3 V11.5" stroke="#a3a3a3"/><rect x="0" y="0" width="13" height="3" fill="#54a4dc"/><rect x="1" y="1" width="11" height="1" fill="#a9d8f5"/></svg>
<div class="a t tr" style="left:63.400000000000006px;top:213px">EMPL2</div>
<div class="a" style="left:37px;top:237px;width:6px;height:1px;background:repeating-linear-gradient(90deg,#a0a0a0 0 1px,transparent 1px 2px)"></div>
<svg class="a" style="left:28px;top:233px" width="9" height="9" viewBox="0 0 9 9"><defs><linearGradient id="bg" x1="0" y1="0" x2="0" y2="1"><stop offset="0" stop-color="#fff"/><stop offset="1" stop-color="#e3e3e3"/></linearGradient></defs><rect x="0.5" y="0.5" width="8" height="8" rx="1.2" fill="url(#bg)" stroke="#919191"/><path d="M2 4.5 H7" stroke="#3b4fa8" stroke-width="1"/><path d="M4.5 2 V7" stroke="#3b4fa8" stroke-width="1"/></svg>
<svg class="a" style="left:45px;top:231px" width="13" height="12" viewBox="0 0 13 12"><rect x="0.5" y="0.5" width="12" height="11" fill="#fff" stroke="#a3a3a3"/><path d="M0.5 5.5 H12.5 M0.5 8.5 H12.5 M4.5 3 V11.5 M8.5 3 V11.5" stroke="#a3a3a3"/><rect x="0" y="0" width="13" height="3" fill="#54a4dc"/><rect x="1" y="1" width="11" height="1" fill="#a9d8f5"/></svg>
<div class="a t tr" style="left:62.400000000000006px;top:229px;padding:0 3px 0 1px;height:15px;background:#d5d5d5">Employees</div>
<div class="a" style="left:37px;top:253px;width:6px;height:1px;background:repeating-linear-gradient(90deg,#a0a0a0 0 1px,transparent 1px 2px)"></div>
<svg class="a" style="left:28px;top:249px" width="9" height="9" viewBox="0 0 9 9"><defs><linearGradient id="bg" x1="0" y1="0" x2="0" y2="1"><stop offset="0" stop-color="#fff"/><stop offset="1" stop-color="#e3e3e3"/></linearGradient></defs><rect x="0.5" y="0.5" width="8" height="8" rx="1.2" fill="url(#bg)" stroke="#919191"/><path d="M2 4.5 H7" stroke="#3b4fa8" stroke-width="1"/><path d="M4.5 2 V7" stroke="#3b4fa8" stroke-width="1"/></svg>
<svg class="a" style="left:45px;top:247px" width="13" height="12" viewBox="0 0 13 12"><rect x="0.5" y="0.5" width="12" height="11" fill="#fff" stroke="#a3a3a3"/><path d="M0.5 5.5 H12.5 M0.5 8.5 H12.5 M4.5 3 V11.5 M8.5 3 V11.5" stroke="#a3a3a3"/><rect x="0" y="0" width="13" height="3" fill="#54a4dc"/><rect x="1" y="1" width="11" height="1" fill="#a9d8f5"/></svg>
<div class="a t tr" style="left:62.400000000000006px;top:245px;padding:0 3px 0 1px;height:15px;background:#d5d5d5">EmployeeTerritories</div>
<div class="a" style="left:37px;top:269px;width:6px;height:1px;background:repeating-linear-gradient(90deg,#a0a0a0 0 1px,transparent 1px 2px)"></div>
<svg class="a" style="left:28px;top:265px" width="9" height="9" viewBox="0 0 9 9"><defs><linearGradient id="bg" x1="0" y1="0" x2="0" y2="1"><stop offset="0" stop-color="#fff"/><stop offset="1" stop-color="#e3e3e3"/></linearGradient></defs><rect x="0.5" y="0.5" width="8" height="8" rx="1.2" fill="url(#bg)" stroke="#919191"/><path d="M2 4.5 H7" stroke="#3b4fa8" stroke-width="1"/><path d="M4.5 2 V7" stroke="#3b4fa8" stroke-width="1"/></svg>
<svg class="a" style="left:45px;top:263px" width="13" height="12" viewBox="0 0 13 12"><rect x="0.5" y="0.5" width="12" height="11" fill="#fff" stroke="#a3a3a3"/><path d="M0.5 5.5 H12.5 M0.5 8.5 H12.5 M4.5 3 V11.5 M8.5 3 V11.5" stroke="#a3a3a3"/><rect x="0" y="0" width="13" height="3" fill="#54a4dc"/><rect x="1" y="1" width="11" height="1" fill="#a9d8f5"/></svg>
<div class="a t tr" style="left:62.400000000000006px;top:261px;padding:0 3px 0 1px;height:15px;background:#d5d5d5">Order Details</div>
<div class="a" style="left:37px;top:285px;width:6px;height:1px;background:repeating-linear-gradient(90deg,#a0a0a0 0 1px,transparent 1px 2px)"></div>
<svg class="a" style="left:28px;top:281px" width="9" height="9" viewBox="0 0 9 9"><defs><linearGradient id="bg" x1="0" y1="0" x2="0" y2="1"><stop offset="0" stop-color="#fff"/><stop offset="1" stop-color="#e3e3e3"/></linearGradient></defs><rect x="0.5" y="0.5" width="8" height="8" rx="1.2" fill="url(#bg)" stroke="#919191"/><path d="M2 4.5 H7" stroke="#3b4fa8" stroke-width="1"/></svg>
<svg class="a" style="left:45px;top:279px" width="13" height="12" viewBox="0 0 13 12"><rect x="0.5" y="0.5" width="12" height="11" fill="#fff" stroke="#a3a3a3"/><path d="M0.5 5.5 H12.5 M0.5 8.5 H12.5 M4.5 3 V11.5 M8.5 3 V11.5" stroke="#a3a3a3"/><rect x="0" y="0" width="13" height="3" fill="#54a4dc"/><rect x="1" y="1" width="11" height="1" fill="#a9d8f5"/></svg>
<div class="a t tr" style="left:62.400000000000006px;top:277px;padding:0 3px 0 1px;height:15px;background:#d5d5d5">Orders</div>
<div class="a" style="left:56px;top:301px;width:6px;height:1px;background:repeating-linear-gradient(90deg,#a0a0a0 0 1px,transparent 1px 2px)"></div>
<svg class="a" style="left:47px;top:297px" width="9" height="9" viewBox="0 0 9 9"><defs><linearGradient id="bg" x1="0" y1="0" x2="0" y2="1"><stop offset="0" stop-color="#fff"/><stop offset="1" stop-color="#e3e3e3"/></linearGradient></defs><rect x="0.5" y="0.5" width="8" height="8" rx="1.2" fill="url(#bg)" stroke="#919191"/><path d="M2 4.5 H7" stroke="#3b4fa8" stroke-width="1"/></svg>
<svg class="a" style="left:64px;top:295px" width="14" height="12" viewBox="0 0 14 12"><path d="M1 1 H6 L7 2.5 H13 V11 H1 Z" fill="#fff" stroke="#c29a5c" stroke-width="2"/><path d="M0 0 H6.3 L7.5 2 H0 Z" fill="#c29a5c"/><path d="M1 3.5 H13" stroke="#c29a5c" stroke-width="1.4"/></svg>
<div class="a t tr" style="left:82.4px;top:293px">Constraints</div>
<div class="a" style="left:71px;top:317px;width:11px;height:1px;background:repeating-linear-gradient(90deg,#a0a0a0 0 1px,transparent 1px 2px)"></div>
<svg class="a" style="left:85px;top:313px" width="12" height="8" viewBox="0 0 12 8"><rect x="0" y="0" width="4.5" height="7.5" rx="1.6" fill="#c58a3a"/><rect x="1.3" y="2.8" width="1.4" height="2" fill="#fff"/><rect x="4" y="2.2" width="7.5" height="3" rx="1.2" fill="#c58a3a"/><rect x="5" y="3.2" width="5.5" height="1" fill="#e8c894"/><path d="M6.5 5 V7 M8.5 5 V6.6" stroke="#c58a3a" stroke-width="1"/></svg>
<div class="a t tr" style="left:100.4px;top:309px">PK_Orders</div>
<div class="a" style="left:56px;top:333px;width:6px;height:1px;background:repeating-linear-gradient(90deg,#a0a0a0 0 1px,transparent 1px 2px)"></div>
<svg class="a" style="left:47px;top:329px" width="9" height="9" viewBox="0 0 9 9"><defs><linearGradient id="bg" x1="0" y1="0" x2="0" y2="1"><stop offset="0" stop-color="#fff"/><stop offset="1" stop-color="#e3e3e3"/></linearGradient></defs><rect x="0.5" y="0.5" width="8" height="8" rx="1.2" fill="url(#bg)" stroke="#919191"/><path d="M2 4.5 H7" stroke="#3b4fa8" stroke-width="1"/></svg>
<svg class="a" style="left:64px;top:327px" width="14" height="12" viewBox="0 0 14 12"><path d="M1 1 H6 L7 2.5 H13 V11 H1 Z" fill="#fff" stroke="#c29a5c" stroke-width="2"/><path d="M0 0 H6.3 L7.5 2 H0 Z" fill="#c29a5c"/><path d="M1 3.5 H13" stroke="#c29a5c" stroke-width="1.4"/></svg>
<div class="a t tr" style="left:82.4px;top:325px">Indexes</div>
<div class="a" style="left:71px;top:349px;width:11px;height:1px;background:repeating-linear-gradient(90deg,#a0a0a0 0 1px,transparent 1px 2px)"></div>
<svg class="a" style="left:83px;top:342px" width="13" height="14" viewBox="0 0 13 14"><rect x="0.5" y="5.5" width="12" height="8" fill="#fff" stroke="#8f8f8f"/><path d="M4.5 5.5 V13.5 M8.5 5.5 V13.5" stroke="#8f8f8f"/><rect x="0" y="3" width="13" height="3" fill="#5db0e4"/><rect x="1" y="3.5" width="11" height="1" fill="#8fcdf2"/><path d="M4.5 3 L6.5 5 L8.5 3 Z" fill="#fff"/><path d="M4 0 H9 L6.5 2.6 Z" fill="#1d4f8c"/><rect x="6" y="7.5" width="1.3" height="1.3" fill="#1d4f8c"/><rect x="6" y="10.6" width="1.3" height="1.3" fill="#1d4f8c"/></svg>
<div class="a t tr" style="left:100.4px;top:341px">CustomerID</div>
<div class="a" style="left:71px;top:365px;width:11px;height:1px;background:repeating-linear-gradient(90deg,#a0a0a0 0 1px,transparent 1px 2px)"></div>
<svg class="a" style="left:83px;top:358px" width="13" height="14" viewBox="0 0 13 14"><rect x="0.5" y="5.5" width="12" height="8" fill="#fff" stroke="#8f8f8f"/><path d="M4.5 5.5 V13.5 M8.5 5.5 V13.5" stroke="#8f8f8f"/><rect x="0" y="3" width="13" height="3" fill="#5db0e4"/><rect x="1" y="3.5" width="11" height="1" fill="#8fcdf2"/><path d="M4.5 3 L6.5 5 L8.5 3 Z" fill="#fff"/><path d="M4 0 H9 L6.5 2.6 Z" fill="#1d4f8c"/><rect x="6" y="7.5" width="1.3" height="1.3" fill="#1d4f8c"/><rect x="6" y="10.6" width="1.3" height="1.3" fill="#1d4f8c"/></svg>
<div class="a t tr" style="left:100.4px;top:357px">CustomersOrders</div>
<div class="a" style="left:71px;top:381px;width:11px;height:1px;background:repeating-linear-gradient(90deg,#a0a0a0 0 1px,transparent 1px 2px)"></div>
<svg class="a" style="left:83px;top:374px" width="13" height="14" viewBox="0 0 13 14"><rect x="0.5" y="5.5" width="12" height="8" fill="#fff" stroke="#8f8f8f"/><path d="M4.5 5.5 V13.5 M8.5 5.5 V13.5" stroke="#8f8f8f"/><rect x="0" y="3" width="13" height="3" fill="#5db0e4"/><rect x="1" y="3.5" width="11" height="1" fill="#8fcdf2"/><path d="M4.5 3 L6.5 5 L8.5 3 Z" fill="#fff"/><path d="M4 0 H9 L6.5 2.6 Z" fill="#1d4f8c"/><rect x="6" y="7.5" width="1.3" height="1.3" fill="#1d4f8c"/><rect x="6" y="10.6" width="1.3" height="1.3" fill="#1d4f8c"/></svg>
<div class="a t tr" style="left:100.4px;top:373px">EmployeeID</div>
<div class="a" style="left:71px;top:397px;width:11px;height:1px;background:repeating-linear-gradient(90deg,#a0a0a0 0 1px,transparent 1px 2px)"></div>
<svg class="a" style="left:83px;top:390px" width="13" height="14" viewBox="0 0 13 14"><rect x="0.5" y="5.5" width="12" height="8" fill="#fff" stroke="#8f8f8f"/><path d="M4.5 5.5 V13.5 M8.5 5.5 V13.5" stroke="#8f8f8f"/><rect x="0" y="3" width="13" height="3" fill="#5db0e4"/><rect x="1" y="3.5" width="11" height="1" fill="#8fcdf2"/><path d="M4.5 3 L6.5 5 L8.5 3 Z" fill="#fff"/><path d="M4 0 H9 L6.5 2.6 Z" fill="#1d4f8c"/><rect x="6" y="7.5" width="1.3" height="1.3" fill="#1d4f8c"/><rect x="6" y="10.6" width="1.3" height="1.3" fill="#1d4f8c"/></svg>
<div class="a t tr" style="left:100.4px;top:389px">EmployeesOrders</div>
<div class="a" style="left:71px;top:413px;width:11px;height:1px;background:repeating-linear-gradient(90deg,#a0a0a0 0 1px,transparent 1px 2px)"></div>
<svg class="a" style="left:83px;top:406px" width="13" height="14" viewBox="0 0 13 14"><rect x="0.5" y="5.5" width="12" height="8" fill="#fff" stroke="#8f8f8f"/><path d="M4.5 5.5 V13.5 M8.5 5.5 V13.5" stroke="#8f8f8f"/><rect x="0" y="3" width="13" height="3" fill="#5db0e4"/><rect x="1" y="3.5" width="11" height="1" fill="#8fcdf2"/><path d="M4.5 3 L6.5 5 L8.5 3 Z" fill="#fff"/><path d="M4 0 H9 L6.5 2.6 Z" fill="#1d4f8c"/><rect x="6" y="7.5" width="1.3" height="1.3" fill="#1d4f8c"/><rect x="6" y="10.6" width="1.3" height="1.3" fill="#1d4f8c"/></svg>
<div class="a t tr" style="left:100.4px;top:405px">OrderDate</div>
<div class="a" style="left:71px;top:429px;width:11px;height:1px;background:repeating-linear-gradient(90deg,#a0a0a0 0 1px,transparent 1px 2px)"></div>
<svg class="a" style="left:83px;top:422px" width="13" height="14" viewBox="0 0 13 14"><rect x="0.5" y="5.5" width="12" height="8" fill="#fff" stroke="#8f8f8f"/><path d="M4.5 5.5 V13.5 M8.5 5.5 V13.5" stroke="#8f8f8f"/><rect x="0" y="3" width="13" height="3" fill="#5db0e4"/><rect x="1" y="3.5" width="11" height="1" fill="#8fcdf2"/><path d="M4.5 3 L6.5 5 L8.5 3 Z" fill="#fff"/><path d="M4 0 H9 L6.5 2.6 Z" fill="#1d4f8c"/><rect x="6" y="7.5" width="1.3" height="1.3" fill="#1d4f8c"/><rect x="6" y="10.6" width="1.3" height="1.3" fill="#1d4f8c"/></svg>
<div class="a t tr" style="left:100.4px;top:421px">OrderDate2</div>
<div class="a" style="left:71px;top:445px;width:11px;height:1px;background:repeating-linear-gradient(90deg,#a0a0a0 0 1px,transparent 1px 2px)"></div>
<svg class="a" style="left:83px;top:438px" width="13" height="14" viewBox="0 0 13 14"><rect x="0.5" y="5.5" width="12" height="8" fill="#fff" stroke="#8f8f8f"/><path d="M4.5 5.5 V13.5 M8.5 5.5 V13.5" stroke="#8f8f8f"/><rect x="0" y="3" width="13" height="3" fill="#5db0e4"/><rect x="1" y="3.5" width="11" height="1" fill="#8fcdf2"/><path d="M4.5 3 L6.5 5 L8.5 3 Z" fill="#fff"/><path d="M4 0 H9 L6.5 2.6 Z" fill="#1d4f8c"/><rect x="6" y="7.5" width="1.3" height="1.3" fill="#1d4f8c"/><rect x="6" y="10.6" width="1.3" height="1.3" fill="#1d4f8c"/></svg>
<div class="a t tr" style="left:100.4px;top:437px">ShippedDate</div>
<div class="a" style="left:71px;top:461px;width:11px;height:1px;background:repeating-linear-gradient(90deg,#a0a0a0 0 1px,transparent 1px 2px)"></div>
<svg class="a" style="left:83px;top:454px" width="13" height="14" viewBox="0 0 13 14"><rect x="0.5" y="5.5" width="12" height="8" fill="#fff" stroke="#8f8f8f"/><path d="M4.5 5.5 V13.5 M8.5 5.5 V13.5" stroke="#8f8f8f"/><rect x="0" y="3" width="13" height="3" fill="#5db0e4"/><rect x="1" y="3.5" width="11" height="1" fill="#8fcdf2"/><path d="M4.5 3 L6.5 5 L8.5 3 Z" fill="#fff"/><path d="M4 0 H9 L6.5 2.6 Z" fill="#1d4f8c"/><rect x="6" y="7.5" width="1.3" height="1.3" fill="#1d4f8c"/><rect x="6" y="10.6" width="1.3" height="1.3" fill="#1d4f8c"/></svg>
<div class="a t tr" style="left:100.4px;top:453px">ShippersOrders</div>
<div class="a" style="left:71px;top:477px;width:11px;height:1px;background:repeating-linear-gradient(90deg,#a0a0a0 0 1px,transparent 1px 2px)"></div>
<svg class="a" style="left:83px;top:470px" width="13" height="14" viewBox="0 0 13 14"><rect x="0.5" y="5.5" width="12" height="8" fill="#fff" stroke="#8f8f8f"/><path d="M4.5 5.5 V13.5 M8.5 5.5 V13.5" stroke="#8f8f8f"/><rect x="0" y="3" width="13" height="3" fill="#5db0e4"/><rect x="1" y="3.5" width="11" height="1" fill="#8fcdf2"/><path d="M4.5 3 L6.5 5 L8.5 3 Z" fill="#fff"/><path d="M4 0 H9 L6.5 2.6 Z" fill="#1d4f8c"/><rect x="6" y="7.5" width="1.3" height="1.3" fill="#1d4f8c"/><rect x="6" y="10.6" width="1.3" height="1.3" fill="#1d4f8c"/></svg>
<div class="a t tr" style="left:100.4px;top:469px">ShipPostalCode</div>
<div class="a" style="left:56px;top:493px;width:6px;height:1px;background:repeating-linear-gradient(90deg,#a0a0a0 0 1px,transparent 1px 2px)"></div>
<svg class="a" style="left:47px;top:489px" width="9" height="9" viewBox="0 0 9 9"><defs><linearGradient id="bg" x1="0" y1="0" x2="0" y2="1"><stop offset="0" stop-color="#fff"/><stop offset="1" stop-color="#e3e3e3"/></linearGradient></defs><rect x="0.5" y="0.5" width="8" height="8" rx="1.2" fill="url(#bg)" stroke="#919191"/><path d="M2 4.5 H7" stroke="#3b4fa8" stroke-width="1"/></svg>
<svg class="a" style="left:64px;top:487px" width="14" height="12" viewBox="0 0 14 12"><path d="M1 1 H6 L7 2.5 H13 V11 H1 Z" fill="#fff" stroke="#c29a5c" stroke-width="2"/><path d="M0 0 H6.3 L7.5 2 H0 Z" fill="#c29a5c"/><path d="M1 3.5 H13" stroke="#c29a5c" stroke-width="1.4"/></svg>
<div class="a t tr" style="left:82.4px;top:485px">Relationships</div>
<div class="a" style="left:71px;top:509px;width:11px;height:1px;background:repeating-linear-gradient(90deg,#a0a0a0 0 1px,transparent 1px 2px)"></div>
<svg class="a" style="left:83px;top:503px" width="14" height="12" viewBox="0 0 14 12"><path d="M10 4 V8.5 H5" stroke="#333" stroke-width="1.1" fill="none"/><rect x="8.5" y="0.5" width="4.8" height="3.8" fill="#fbd46a" stroke="#c58a3a"/><rect x="0.5" y="7.5" width="4.8" height="3.8" fill="#fbd46a" stroke="#c58a3a"/></svg>
<div class="a t tr" style="left:99.4px;top:501px;padding:0 3px 0 1px;height:15px;background:#d5d5d5">FK_Order_Details_Orders [Order Details]</div>
<div class="a" style="left:71px;top:525px;width:11px;height:1px;background:repeating-linear-gradient(90deg,#a0a0a0 0 1px,transparent 1px 2px)"></div>
<svg class="a" style="left:83px;top:519px" width="14" height="12" viewBox="0 0 14 12"><path d="M10 4 V8.5 H5" stroke="#333" stroke-width="1.1" fill="none"/><rect x="8.5" y="0.5" width="4.8" height="3.8" fill="#fbd46a" stroke="#c58a3a"/><rect x="0.5" y="7.5" width="4.8" height="3.8" fill="#fbd46a" stroke="#c58a3a"/></svg>
<div class="a t tr" style="left:99.4px;top:517px;padding:0 3px 0 1px;height:15px;background:#d5d5d5">FK_Orders_Customers [Orders]</div>
<div class="a" style="left:71px;top:541px;width:11px;height:1px;background:repeating-linear-gradient(90deg,#a0a0a0 0 1px,transparent 1px 2px)"></div>
<svg class="a" style="left:83px;top:535px" width="14" height="12" viewBox="0 0 14 12"><path d="M10 4 V8.5 H5" stroke="#333" stroke-width="1.1" fill="none"/><rect x="8.5" y="0.5" width="4.8" height="3.8" fill="#fbd46a" stroke="#c58a3a"/><rect x="0.5" y="7.5" width="4.8" height="3.8" fill="#fbd46a" stroke="#c58a3a"/></svg>
<div class="a t tr" style="left:99.4px;top:533px;padding:0 3px 0 1px;height:15px;background:#d5d5d5">FK_Orders_Employees [Orders]</div>
</div>
<div class="a" style="left:248px;top:102px;width:17px;height:551px;background:#f0f0f0"></div>
<div class="a" style="left:249px;top:119px;width:15px;height:214px;background:#cdcdcd"></div>
<svg class="a" style="left:252.0px;top:108px" width="9" height="6" viewBox="0 0 9 6"><path d="M0.8 5.2 L4.5 1.5 L8.2 5.2" fill="none" stroke="#505050" stroke-width="1.9"/></svg>
<svg class="a" style="left:252.0px;top:642px" width="9" height="6" viewBox="0 0 9 6"><path d="M0.8 0.8 L4.5 4.5 L8.2 0.8" fill="none" stroke="#505050" stroke-width="1.9"/></svg>
<div class="a" style="left:10px;top:653px;width:238px;height:17px;background:#f0f0f0"></div>
<div class="a" style="left:27px;top:654px;width:104px;height:15px;background:#cdcdcd"></div>
<svg class="a" style="left:15px;top:657.0px" width="6" height="9" viewBox="0 0 6 9"><path d="M5.2 0.8 L1.5 4.5 L5.2 8.2" fill="none" stroke="#505050" stroke-width="1.9"/></svg>
<svg class="a" style="left:237px;top:657.0px" width="6" height="9" viewBox="0 0 6 9"><path d="M0.8 0.8 L4.5 4.5 L0.8 8.2" fill="none" stroke="#505050" stroke-width="1.9"/></svg>
<div class="a" style="left:248px;top:653px;width:17px;height:17px;background:#f0f0f0"></div>
<div class="a" style="left:273px;top:104px;width:492px;height:448px;overflow:hidden;background:#fff">
<div class="a" style="left:254px;top:0;width:400px;height:600px;background:#f7ffff"></div>
<div class="a" style="left:253px;top:0;width:1px;height:600px;background:#b8b8b8"></div>
<div class="a" style="left:253px;top:0;width:1px;height:600px;background:repeating-linear-gradient(#22e022 0 5px,transparent 5px 8px)"></div>
<div class="a" style="left:53px;top:29px;width:1px;height:32px;background:#d4d4d4"></div>
<div class="a" style="left:53px;top:61px;width:18px;height:1px;background:#d4d4d4"></div>
<div class="a" style="left:70px;top:61px;width:1px;height:39px;background:#d4d4d4"></div>
<div class="a" style="left:67px;top:269px;width:1px;height:109px;background:#d4d4d4"></div>
<div class="a t dt" style="left:96px;top:55px">demofk</div>
<div class="a t dt" style="left:0px;top:321px">_E2_EID</div>
<div class="a t dt" style="left:319px;top:304px">FK_Orders_Customers</div>
<div class="a t dt" style="left:488px;top:234px">F</div>
<div class="a" style="left:430px;top:53px;width:70px;height:1px;background:#d8d8d8"></div>
<div class="a" style="left:430px;top:53px;width:70px;height:1px;background:repeating-linear-gradient(90deg,#22e022 0 5px,transparent 5px 8px)"></div>
<div class="a" style="left:430px;top:129px;width:70px;height:1px;background:#d8d8d8"></div>
<div class="a" style="left:430px;top:129px;width:70px;height:1px;background:repeating-linear-gradient(90deg,#22e022 0 5px,transparent 5px 8px)"></div>
<div class="a" style="left:430px;top:221px;width:70px;height:1px;background:#d8d8d8"></div>
<div class="a" style="left:430px;top:221px;width:70px;height:1px;background:repeating-linear-gradient(90deg,#22e022 0 5px,transparent 5px 8px)"></div>
<div class="a" style="left:433px;top:49px;width:1px;height:4px;background:#22e022"></div>
<div class="a" style="left:433px;top:125px;width:1px;height:4px;background:#22e022"></div>
<svg class="a" style="left:430px;top:216px" width="8" height="10" viewBox="0 0 8 10"><path d="M0 5 H7 M0 1.5 L5 5 L0 8.5" fill="none" stroke="#22e022" stroke-width="1"/></svg>
<div class="a" style="left:297px;top:239px;width:1px;height:133px;background:#d8d8d8"></div>
<div class="a" style="left:297px;top:239px;width:1px;height:133px;background:repeating-linear-gradient(#22e022 0 5px,transparent 5px 8px)"></div>
<div class="a" style="left:298px;top:242px;width:4px;height:1px;background:#22e022"></div>
<svg class="a" style="left:292px;top:365px" width="12" height="8" viewBox="0 0 12 8"><path d="M1.5 7 L6 2.5 L10.5 7 M6 1 V8" fill="none" stroke="#22e022" stroke-width="1"/></svg>
<div class="a" style="left:-11px;top:-24px;width:114px;height:52px;border:1px solid #222;background:#ffffcf"></div>
<div class="a" style="left:-10px;top:-23px;width:114px;height:52px;overflow:hidden">
<div class="a t dt" style="left:24px;top:20px">col1 : numeric (15,5)</div>
<div class="a t dt" style="left:24px;top:34px">col2 : varchar (255)</div>
</div>
<div class="a" style="left:7px;top:100px;width:141px;height:57px;border:1px solid #222;background:#ffffcf"></div>
<div class="a" style="left:8px;top:115px;width:143px;height:1px;background:#333"></div>
<div class="a t" style="left:7px;top:103px;width:142px;text-align:center;font-size:10px;font-weight:bold;line-height:12px;color:#000">tDemo</div>
<div class="a" style="left:8px;top:101px;width:141px;height:57px;overflow:hidden">
<div class="a t dt" style="left:18px;top:15.5px">ListEntryId : numeric (15,5)</div>
<div class="a t dt" style="left:18px;top:29.5px">ListId : numeric (15,5) <span style="color:#c81ec8;font-size:12px;position:relative;top:-2px;margin-left:0.5px">*</span></div>
<svg class="a" style="left:3px;top:32px" width="10" height="7" viewBox="0 0 10 7"><rect x="0" y="0.3" width="3.8" height="6" rx="1.4" fill="#c98d3c"/><rect x="1.2" y="2.4" width="1.2" height="1.8" fill="#fff6dc"/><rect x="3.3" y="2" width="6.4" height="2.4" rx="1" fill="#c98d3c"/><rect x="4.2" y="2.8" width="4.8" height="0.8" fill="#ecd2a4"/><path d="M6 4.2 V5.6 M8 4.2 V5.3" stroke="#c98d3c" stroke-width="0.9"/></svg>
<div class="a t dt" style="left:18px;top:43.5px">ItemValue : varchar (255)<span style="color:#c81ec8;font-size:12px;position:relative;top:-2px;margin-left:0.5px">*</span></div>
<svg class="a" style="left:3px;top:46px" width="10" height="7" viewBox="0 0 10 7"><rect x="0" y="0.3" width="3.8" height="6" rx="1.4" fill="#c98d3c"/><rect x="1.2" y="2.4" width="1.2" height="1.8" fill="#fff6dc"/><rect x="3.3" y="2" width="6.4" height="2.4" rx="1" fill="#c98d3c"/><rect x="4.2" y="2.8" width="4.8" height="0.8" fill="#ecd2a4"/><path d="M6 4.2 V5.6 M8 4.2 V5.3" stroke="#c98d3c" stroke-width="0.9"/></svg>
</div>
<div class="a" style="left:5px;top:177px;width:133px;height:91px;border:1px solid #222;background:#ffffcf"></div>
<div class="a" style="left:6px;top:192px;width:135px;height:1px;background:#333"></div>
<div class="a t" style="left:5px;top:180px;width:134px;text-align:center;font-size:10px;font-weight:bold;line-height:12px;color:#000">EMPL1</div>
<div class="a" style="left:6px;top:178px;width:133px;height:91px;overflow:hidden">
<div class="a t dt" style="left:18.5px;top:16px">EMPLOYEEID : int</div>
<svg class="a" style="left:3px;top:19px" width="10" height="7" viewBox="0 0 10 7"><rect x="0" y="0.3" width="3.8" height="6" rx="1.4" fill="#c98d3c"/><rect x="1.2" y="2.4" width="1.2" height="1.8" fill="#fff6dc"/><rect x="3.3" y="2" width="6.4" height="2.4" rx="1" fill="#c98d3c"/><rect x="4.2" y="2.8" width="4.8" height="0.8" fill="#ecd2a4"/><path d="M6 4.2 V5.6 M8 4.2 V5.3" stroke="#c98d3c" stroke-width="0.9"/></svg>
<div class="a t dt" style="left:18.5px;top:30.5px">NAME : varchar (100)</div>
<div class="a t dt" style="left:18.5px;top:45px">SALARY : int</div>
<svg class="a" style="left:3px;top:48px" width="10" height="7" viewBox="0 0 10 7"><rect x="0" y="0.3" width="3.8" height="6" rx="1.4" fill="#c98d3c"/><rect x="1.2" y="2.4" width="1.2" height="1.8" fill="#fff6dc"/><rect x="3.3" y="2" width="6.4" height="2.4" rx="1" fill="#c98d3c"/><rect x="4.2" y="2.8" width="4.8" height="0.8" fill="#ecd2a4"/><path d="M6 4.2 V5.6 M8 4.2 V5.3" stroke="#c98d3c" stroke-width="0.9"/></svg>
<div class="a t dt" style="left:18.5px;top:59px">TITLE : int</div>
<div class="a t dt" style="left:18.5px;top:73px">CREATEDDATE : datetime</div>
</div>
<div class="a" style="left:-11px;top:378px;width:139px;height:117px;border:1px solid #222;background:#ffffcf"></div>
<div class="a" style="left:-10px;top:393px;width:141px;height:1px;background:#333"></div>
<div class="a t" style="left:-11px;top:381px;width:140px;text-align:center;font-size:10px;font-weight:bold;line-height:12px;color:#000">EMPL2</div>
<div class="a" style="left:-10px;top:379px;width:139px;height:117px;overflow:hidden">
<div class="a t dt" style="left:24px;top:16px">EMPLOYEEID : int<span style="color:#c81ec8;font-size:12px;position:relative;top:-2px;margin-left:0.5px">*</span></div>
<svg class="a" style="left:9px;top:19px" width="10" height="7" viewBox="0 0 10 7"><rect x="0" y="0.3" width="3.8" height="6" rx="1.4" fill="#c98d3c"/><rect x="1.2" y="2.4" width="1.2" height="1.8" fill="#fff6dc"/><rect x="3.3" y="2" width="6.4" height="2.4" rx="1" fill="#c98d3c"/><rect x="4.2" y="2.8" width="4.8" height="0.8" fill="#ecd2a4"/><path d="M6 4.2 V5.6 M8 4.2 V5.3" stroke="#c98d3c" stroke-width="0.9"/></svg>
<div class="a t dt" style="left:24px;top:30px">NAME : varchar (100)</div>
<div class="a t dt" style="left:24px;top:44px">SALARY : int</div>
<div class="a t dt" style="left:24px;top:58px">TITLE : int<span style="color:#c81ec8;font-size:12px;position:relative;top:-2px;margin-left:0.5px">*</span></div>
<svg class="a" style="left:9px;top:61px" width="10" height="7" viewBox="0 0 10 7"><rect x="0" y="0.3" width="3.8" height="6" rx="1.4" fill="#c98d3c"/><rect x="1.2" y="2.4" width="1.2" height="1.8" fill="#fff6dc"/><rect x="3.3" y="2" width="6.4" height="2.4" rx="1" fill="#c98d3c"/><rect x="4.2" y="2.8" width="4.8" height="0.8" fill="#ecd2a4"/><path d="M6 4.2 V5.6 M8 4.2 V5.3" stroke="#c98d3c" stroke-width="0.9"/></svg>
</div>
<div class="a" style="left:270px;top:21px;width:158px;height:217px;border:1px solid #222;background:#d2d2fe"></div>
<div class="a" style="left:270px;top:21px;width:160px;height:1px;background:repeating-linear-gradient(90deg,#22e022 0 4px,transparent 4px 8px)"></div>
<div class="a" style="left:270px;top:239px;width:160px;height:1px;background:repeating-linear-gradient(90deg,#22e022 0 4px,transparent 4px 8px)"></div>
<div class="a" style="left:270px;top:21px;width:1px;height:219px;background:repeating-linear-gradient(#22e022 0 4px,transparent 4px 8px)"></div>
<div class="a" style="left:429px;top:21px;width:1px;height:219px;background:repeating-linear-gradient(#22e022 0 4px,transparent 4px 8px)"></div>
<div class="a" style="left:271px;top:36px;width:160px;height:1px;background:#333"></div>
<div class="a t" style="left:270px;top:23px;width:159px;text-align:center;font-size:10px;font-weight:bold;line-height:12px;color:#000">Orders</div>
<div class="a" style="left:271px;top:22px;width:158px;height:217px;overflow:hidden">
<div class="a t dt" style="left:18px;top:16.0px">OrderID : int<span style="color:#c81ec8;font-size:12px;position:relative;top:-2px;margin-left:0.5px">*</span></div>
<svg class="a" style="left:3px;top:18px" width="10" height="7" viewBox="0 0 10 7"><rect x="0" y="0.3" width="3.8" height="6" rx="1.4" fill="#c98d3c"/><rect x="1.2" y="2.4" width="1.2" height="1.8" fill="#fff6dc"/><rect x="3.3" y="2" width="6.4" height="2.4" rx="1" fill="#c98d3c"/><rect x="4.2" y="2.8" width="4.8" height="0.8" fill="#ecd2a4"/><path d="M6 4.2 V5.6 M8 4.2 V5.3" stroke="#c98d3c" stroke-width="0.9"/></svg>
<div class="a t dt" style="left:18px;top:30.30000000000001px">CustomerID : nchar (5)</div>
<svg class="a" style="left:7px;top:31px" width="6" height="10" viewBox="0 0 6 10"><rect x="0" y="1" width="6" height="9" fill="#7d7d7d"/><rect x="1.2" y="2.3" width="3.6" height="3" fill="#fff"/><rect x="1.2" y="6.2" width="3.6" height="2.6" fill="#fff"/><circle cx="3" cy="3.8" r="0.9" fill="#1e3f86"/><circle cx="3" cy="7.6" r="0.8" fill="#1e3f86"/><path d="M1 0.2 H5 L4.4 1.4 H1.6 Z" fill="#2a5596"/></svg>
<div class="a t dt" style="left:18px;top:44.599999999999994px">EmployeeID : int</div>
<svg class="a" style="left:7px;top:45px" width="6" height="10" viewBox="0 0 6 10"><rect x="0" y="1" width="6" height="9" fill="#7d7d7d"/><rect x="1.2" y="2.3" width="3.6" height="3" fill="#fff"/><rect x="1.2" y="6.2" width="3.6" height="2.6" fill="#fff"/><circle cx="3" cy="3.8" r="0.9" fill="#1e3f86"/><circle cx="3" cy="7.6" r="0.8" fill="#1e3f86"/><path d="M0 0 H6 L5 1.6 H1 Z" fill="#1e4a8c"/></svg>
<div class="a t dt" style="left:18px;top:58.900000000000006px">OrderDate : datetime</div>
<svg class="a" style="left:7px;top:59px" width="6" height="10" viewBox="0 0 6 10"><rect x="0" y="1" width="6" height="9" fill="#7d7d7d"/><rect x="1.2" y="2.3" width="3.6" height="3" fill="#fff"/><rect x="1.2" y="6.2" width="3.6" height="2.6" fill="#fff"/><circle cx="3" cy="3.8" r="0.9" fill="#1e3f86"/><circle cx="3" cy="7.6" r="0.8" fill="#1e3f86"/><path d="M0 0 H6 L5 1.6 H1 Z" fill="#1e4a8c"/></svg>
<div class="a t dt" style="left:18px;top:73.19999999999999px">RequiredDate : datetime</div>
<div class="a t dt" style="left:18px;top:87.4px">ShippedDate : datetime</div>
<svg class="a" style="left:7px;top:88px" width="6" height="10" viewBox="0 0 6 10"><rect x="0" y="1" width="6" height="9" fill="#7d7d7d"/><rect x="1.2" y="2.3" width="3.6" height="3" fill="#fff"/><rect x="1.2" y="6.2" width="3.6" height="2.6" fill="#fff"/><circle cx="3" cy="3.8" r="0.9" fill="#1e3f86"/><circle cx="3" cy="7.6" r="0.8" fill="#1e3f86"/><path d="M1 0.2 H5 L4.4 1.4 H1.6 Z" fill="#2a5596"/></svg>
<div class="a t dt" style="left:18px;top:101.69999999999999px">ShipVia : int</div>
<svg class="a" style="left:7px;top:102px" width="6" height="10" viewBox="0 0 6 10"><rect x="0" y="1" width="6" height="9" fill="#7d7d7d"/><rect x="1.2" y="2.3" width="3.6" height="3" fill="#fff"/><rect x="1.2" y="6.2" width="3.6" height="2.6" fill="#fff"/><circle cx="3" cy="3.8" r="0.9" fill="#1e3f86"/><circle cx="3" cy="7.6" r="0.8" fill="#1e3f86"/><path d="M0 0 H6 L5 1.6 H1 Z" fill="#1e4a8c"/></svg>
<div class="a t dt" style="left:18px;top:116.0px">Freight : money</div>
<div class="a t dt" style="left:18px;top:130.3px">ShipName : nvarchar (40)</div>
<div class="a t dt" style="left:18px;top:144.60000000000002px">ShipAddress : nvarchar (60)</div>
<div class="a t dt" style="left:18px;top:158.89999999999998px">ShipCity : nvarchar (15)</div>
<div class="a t dt" style="left:18px;top:173.2px">ShipRegion : nvarchar (15)</div>
<div class="a t dt" style="left:18px;top:187.5px">ShipPostalCode : nvarchar (10)</div>
<svg class="a" style="left:7px;top:188px" width="6" height="10" viewBox="0 0 6 10"><rect x="0" y="1" width="6" height="9" fill="#7d7d7d"/><rect x="1.2" y="2.3" width="3.6" height="3" fill="#fff"/><rect x="1.2" y="6.2" width="3.6" height="2.6" fill="#fff"/><circle cx="3" cy="3.8" r="0.9" fill="#1e3f86"/><circle cx="3" cy="7.6" r="0.8" fill="#1e3f86"/><path d="M1 0.2 H5 L4.4 1.4 H1.6 Z" fill="#2a5596"/></svg>
<div class="a t dt" style="left:18px;top:201.8px">ShipCountry : nvarchar (15)</div>
</div>
<div class="a" style="left:273px;top:372px;width:149px;height:123px;border:1px solid #222;background:#ffffcf"></div>
<div class="a" style="left:273px;top:372px;width:151px;height:1px;background:repeating-linear-gradient(90deg,#22e022 0 4px,transparent 4px 8px)"></div>
<div class="a" style="left:273px;top:496px;width:151px;height:1px;background:repeating-linear-gradient(90deg,#22e022 0 4px,transparent 4px 8px)"></div>
<div class="a" style="left:273px;top:372px;width:1px;height:125px;background:repeating-linear-gradient(#22e022 0 4px,transparent 4px 8px)"></div>
<div class="a" style="left:423px;top:372px;width:1px;height:125px;background:repeating-linear-gradient(#22e022 0 4px,transparent 4px 8px)"></div>
<div class="a" style="left:274px;top:386px;width:151px;height:1px;background:#333"></div>
<div class="a t" style="left:273px;top:374px;width:150px;text-align:center;font-size:10px;font-weight:bold;line-height:12px;color:#000">Customers</div>
<div class="a" style="left:274px;top:373px;width:149px;height:123px;overflow:hidden">
<div class="a t dt" style="left:18px;top:15px">CustomerID : nchar (5)<span style="color:#c81ec8;font-size:12px;position:relative;top:-2px;margin-left:0.5px">*</span></div>
<svg class="a" style="left:3px;top:17px" width="10" height="7" viewBox="0 0 10 7"><rect x="0" y="0.3" width="3.8" height="6" rx="1.4" fill="#c98d3c"/><rect x="1.2" y="2.4" width="1.2" height="1.8" fill="#fff6dc"/><rect x="3.3" y="2" width="6.4" height="2.4" rx="1" fill="#c98d3c"/><rect x="4.2" y="2.8" width="4.8" height="0.8" fill="#ecd2a4"/><path d="M6 4.2 V5.6 M8 4.2 V5.3" stroke="#c98d3c" stroke-width="0.9"/></svg>
<div class="a t dt" style="left:18px;top:29.5px">CompanyName : nvarchar (40)</div>
<svg class="a" style="left:7px;top:30px" width="6" height="10" viewBox="0 0 6 10"><rect x="0" y="1" width="6" height="9" fill="#7d7d7d"/><rect x="1.2" y="2.3" width="3.6" height="3" fill="#fff"/><rect x="1.2" y="6.2" width="3.6" height="2.6" fill="#fff"/><circle cx="3" cy="3.8" r="0.9" fill="#1e3f86"/><circle cx="3" cy="7.6" r="0.8" fill="#1e3f86"/><path d="M0 0 H6 L5 1.6 H1 Z" fill="#1e4a8c"/></svg>
<div class="a t dt" style="left:18px;top:43.5px">ContactName : nvarchar (30)</div>
<div class="a t dt" style="left:18px;top:57.5px">ContactTitle : nvarchar (30)</div>
<div class="a t dt" style="left:18px;top:72px">Address : nvarchar (60)</div>
</div>
</div>
<div class="a" style="left:765px;top:104px;width:17px;height:448px;background:#f0f0f0"></div>
<div class="a" style="left:766px;top:139px;width:15px;height:200px;background:#cdcdcd"></div>
<svg class="a" style="left:769.0px;top:110px" width="9" height="6" viewBox="0 0 9 6"><path d="M0.8 5.2 L4.5 1.5 L8.2 5.2" fill="none" stroke="#505050" stroke-width="1.9"/></svg>
<svg class="a" style="left:769.0px;top:541px" width="9" height="6" viewBox="0 0 9 6"><path d="M0.8 0.8 L4.5 4.5 L8.2 0.8" fill="none" stroke="#505050" stroke-width="1.9"/></svg>
<div class="a" style="left:273px;top:552px;width:492px;height:17px;background:#f0f0f0"></div>
<div class="a" style="left:385px;top:553px;width:124px;height:15px;background:#cdcdcd"></div>
<svg class="a" style="left:278px;top:556.0px" width="6" height="9" viewBox="0 0 6 9"><path d="M5.2 0.8 L1.5 4.5 L5.2 8.2" fill="none" stroke="#505050" stroke-width="1.9"/></svg>
<svg class="a" style="left:754px;top:556.0px" width="6" height="9" viewBox="0 0 6 9"><path d="M0.8 0.8 L4.5 4.5 L0.8 8.2" fill="none" stroke="#505050" stroke-width="1.9"/></svg>
<div class="a" style="left:765px;top:552px;width:17px;height:17px;background:#f0f0f0"></div>
<div class="a" style="left:278px;top:83px;width:127px;height:19px;border:1px solid #a0a0a0;border-bottom:none;background:#e6e6e6"></div>
<div class="a t" style="left:283px;top:85px;font-size:12px;font-weight:bold;letter-spacing:-0.1px;line-height:14px;color:#000;-webkit-text-stroke:0.1px">SQL Server 2000 - 54</div>
<div class="a t" style="left:411px;top:85px;font-size:11px;letter-spacing:-0.18px;line-height:14px;color:#000">Views - Northwind</div>
<div class="a" style="left:502px;top:86px;width:1px;height:16px;background:#acacac"></div>
<svg class="a" style="left:736px;top:86px" width="7" height="11" viewBox="0 0 7 11"><path d="M5.8 1 L1 5.5 L5.8 10 Z" fill="none" stroke="#000" stroke-width="1.15"/></svg>
<svg class="a" style="left:753px;top:86px" width="7" height="11" viewBox="0 0 7 11"><path d="M1.2 1 L6 5.5 L1.2 10 Z" fill="none" stroke="#000" stroke-width="1.15"/></svg>
<svg class="a" style="left:768px;top:87px" width="9" height="10" viewBox="0 0 9 10" shape-rendering="crispEdges"><rect x="0" y="0" width="9" height="10" fill="#000"/><rect x="1" y="1" width="7" height="8" fill="#fff"/><rect x="2" y="3" width="5" height="1" fill="#000"/><rect x="2" y="5" width="5" height="1" fill="#000"/><rect x="2" y="7" width="5" height="1" fill="#000"/></svg>
<div class="a" style="left:790px;top:102px;width:198px;height:23px;background:#f0f0f0"></div>
<svg class="a" style="left:796px;top:109px" width="9" height="9" viewBox="0 0 9 9"><defs><linearGradient id="bg" x1="0" y1="0" x2="0" y2="1"><stop offset="0" stop-color="#fff"/><stop offset="1" stop-color="#e3e3e3"/></linearGradient></defs><rect x="0.5" y="0.5" width="8" height="8" rx="1.2" fill="url(#bg)" stroke="#919191"/><path d="M2 4.5 H7" stroke="#3b4fa8" stroke-width="1"/></svg>
<div class="a t pt" style="left:810px;top:105px">Entities</div>
<svg class="a" style="left:795px;top:127px" width="30" height="24" viewBox="0 0 30 24">
<rect x="0.5" y="0.5" width="29" height="23" fill="#fffcc8" stroke="#c8c8a0"/><rect x="0" y="0" width="30" height="3.5" fill="#d4d4c0"/><rect x="10" y="0.8" width="12" height="2" fill="#333" fill-opacity="0.55"/>
<path d="M2 6.5 h2 M2 12.5 h2" stroke="#d09020" stroke-width="1.5"/><path d="M6 6.5 H12" stroke="#555" stroke-width="0.9" stroke-opacity="0.45"/><path d="M6 9.5 H20" stroke="#555" stroke-width="0.9" stroke-opacity="0.45"/><path d="M6 12.5 H24" stroke="#555" stroke-width="0.9" stroke-opacity="0.45"/><path d="M6 15.5 H18" stroke="#555" stroke-width="0.9" stroke-opacity="0.45"/><path d="M6 18.5 H16" stroke="#555" stroke-width="0.9" stroke-opacity="0.45"/><path d="M6 21.5 H20" stroke="#555" stroke-width="0.9" stroke-opacity="0.45"/></svg>
<svg class="a" style="left:796px;top:157px" width="29" height="24" viewBox="0 0 29 24">
<rect x="0.5" y="0.5" width="28" height="23" fill="#ebebff" stroke="#a0a0c0"/><rect x="0" y="0" width="29" height="3.5" fill="#bdbdbd"/><rect x="9" y="0.8" width="12" height="2" fill="#333" fill-opacity="0.45"/><path d="M6 6.5 H16" stroke="#555" stroke-width="0.9" stroke-opacity="0.45"/><path d="M6 9.5 H12" stroke="#555" stroke-width="0.9" stroke-opacity="0.45"/><path d="M6 12.5 H18" stroke="#555" stroke-width="0.9" stroke-opacity="0.45"/><path d="M6 15.5 H20" stroke="#555" stroke-width="0.9" stroke-opacity="0.45"/><path d="M6 18.5 H16" stroke="#555" stroke-width="0.9" stroke-opacity="0.45"/><path d="M6 21.5 H16" stroke="#555" stroke-width="0.9" stroke-opacity="0.45"/></svg>
<svg class="a" style="left:796px;top:187px" width="29" height="24" viewBox="0 0 29 24">
<rect x="0.75" y="0.75" width="27.5" height="22.5" fill="#fff" stroke="#8c8c8c" stroke-width="1.5"/><rect x="0" y="0" width="29" height="3.5" fill="#bdbdbd"/><rect x="9" y="0.8" width="12" height="2" fill="#333" fill-opacity="0.45"/></svg>
<svg class="a" style="left:796px;top:217px" width="29" height="24" viewBox="0 0 29 24">
<rect x="0.75" y="0.75" width="27.5" height="22.5" fill="#f0f0f0" stroke="#8c8c8c" stroke-width="1.5"/><path d="M3 4 H10" stroke="#666" stroke-width="1"/></svg>
<div class="a t pt" style="left:829px;top:130.8px">Table</div>
<div class="a t pt" style="left:829px;top:161px">View</div>
<div class="a t pt" style="left:829px;top:190.5px">Note</div>
<div class="a t pt" style="left:829px;top:220.7px">Region</div>
<div class="a" style="left:790px;top:245px;width:198px;height:1px;background:#e6e6e6"></div>
<div class="a" style="left:790px;top:247px;width:198px;height:23px;background:#f0f0f0"></div>
<svg class="a" style="left:796px;top:254px" width="9" height="9" viewBox="0 0 9 9"><defs><linearGradient id="bg" x1="0" y1="0" x2="0" y2="1"><stop offset="0" stop-color="#fff"/><stop offset="1" stop-color="#e3e3e3"/></linearGradient></defs><rect x="0.5" y="0.5" width="8" height="8" rx="1.2" fill="url(#bg)" stroke="#919191"/><path d="M2 4.5 H7" stroke="#3b4fa8" stroke-width="1"/></svg>
<div class="a t pt" style="left:810px;top:250px">Relationships</div>
<svg class="a" style="left:795px;top:277px" width="31" height="18" viewBox="0 0 31 18"><path d="M0 1.5 H15.5 V12.5 H23 M23 12.5 L30 8 M23 12.5 H30 M23 12.5 L30 17" fill="none" stroke="#707070" stroke-width="1"/></svg>
<svg class="a" style="left:795px;top:307px" width="31" height="18" viewBox="0 0 31 18"><path d="M0 1.5 H15.5 V12.5 H23" fill="none" stroke="#707070" stroke-width="1" stroke-dasharray="2.5 1.5"/><path d="M23 12.5 L30 8 M23 12.5 H30 M23 12.5 L30 17" fill="none" stroke="#707070" stroke-width="1"/></svg>
<svg class="a" style="left:802px;top:337px" width="15" height="12" viewBox="0 0 15 12"><path d="M0.5 11 V6.5 A7 6 0 0 1 14.5 6.5 V11 Z" fill="none" stroke="#707070" stroke-width="1"/><path d="M2.5 2 L11.5 11 M12.5 2 L3.5 11" stroke="#707070" stroke-width="1"/></svg>
<div class="a t pt" style="left:829.5px;top:276px">One to Many</div>
<div class="a t pt" style="left:829.5px;top:306px">One to Many (NI)</div>
<div class="a t pt" style="left:829.5px;top:335.5px">Subcategory</div>
<div class="a" style="left:858px;top:544px;width:130px;height:100px;background:#f7ffff;border-left:1px solid #e4eeee;border-top:1px solid #eef4f4"></div>
<div class="a" style="left:793px;top:545px;width:9px;height:6px;background:#ffffd2;border:1px solid #d8d8a8"></div>
<div class="a" style="left:806px;top:545px;width:15px;height:20px;background:#ffffd2;border:1px solid #d8d8a8"></div>
<div class="a" style="left:789px;top:555px;width:11px;height:40px;background:#ffffd2;border:1px solid #d8d8a8"></div>
<div class="a" style="left:806px;top:569px;width:15px;height:9px;background:#ffd2ff;border:1px solid #d0a0d0"></div>
<div class="a" style="left:809px;top:586px;width:12px;height:5px;background:#ffffd2;border:1px solid #d8d8a8"></div>
<div class="a" style="left:790px;top:595px;width:16px;height:21px;background:#ffffd2;border:1px solid #d8d8a8"></div>
<div class="a" style="left:810px;top:602px;width:16px;height:7px;background:#ffffd2;border:1px solid #d8d8a8"></div>
<div class="a" style="left:790px;top:620px;width:25px;height:10px;background:#ffffd2;border:1px solid #d8d8a8"></div>
<div class="a" style="left:790px;top:633px;width:25px;height:7px;background:#ffffd2;border:1px solid #d8d8a8"></div>
<div class="a" style="left:830px;top:545px;width:10px;height:4px;background:#ffffd2;border:1px solid #d8d8a8"></div>
<div class="a" style="left:831px;top:558px;width:14px;height:5px;background:#ffffd2;border:1px solid #d8d8a8"></div>
<div class="a" style="left:831px;top:566px;width:13px;height:10px;background:#ffffd2;border:1px solid #d8d8a8"></div>
<div class="a" style="left:829px;top:589px;width:14px;height:9px;background:#ffffd2;border:1px solid #d8d8a8"></div>
<div class="a" style="left:860px;top:549px;width:16px;height:23px;background:#d2d2fe;border:1px solid #a8a8d8"></div>
<div class="a" style="left:860px;top:588px;width:16px;height:23px;background:#ffffd2;border:1px solid #d8d8a8"></div>
<div class="a" style="left:868px;top:614px;width:16px;height:6px;background:#ffffd2;border:1px solid #d8d8a8"></div>
<div class="a" style="left:860px;top:635px;width:16px;height:5px;background:#ffffd2;border:1px solid #d8d8a8"></div>
<div class="a" style="left:884px;top:602px;width:16px;height:5px;background:#ffffd2;border:1px solid #d8d8a8"></div>
<div class="a" style="left:888px;top:588px;width:16px;height:4px;background:#ffffd2;border:1px solid #d8d8a8"></div>
<div class="a" style="left:890px;top:627px;width:14px;height:5px;background:#ffffd2;border:1px solid #d8d8a8"></div>
<div class="a" style="left:905px;top:574px;width:10px;height:9px;background:#ffffd2;border:1px solid #d8d8a8"></div>
<div class="a" style="left:916px;top:549px;width:16px;height:5px;background:#ffffd2;border:1px solid #d8d8a8"></div>
<div class="a" style="left:933px;top:563px;width:17px;height:16px;background:#ffffd2;border:1px solid #d8d8a8"></div>
<div class="a" style="left:917px;top:596px;width:16px;height:30px;background:#00ffc8;border:1px solid #00d8a8"></div>
<div class="a" style="left:945px;top:619px;width:16px;height:7px;background:#ffffd2;border:1px solid #d8d8a8"></div>
<div class="a" style="left:967px;top:548px;width:16px;height:21px;background:#ffffd2;border:1px solid #d8d8a8"></div>
<div class="a" style="left:968px;top:631px;width:10px;height:5px;background:#ffffd2;border:1px solid #d8d8a8"></div>
<div class="a" style="left:870px;top:543px;width:10px;height:1px;background:#c8c8c8"></div>
<div class="a" style="left:830px;top:547px;width:53px;height:48px;border:1px solid #ff0000"></div>
<div class="a" style="left:881px;top:593px;width:5px;height:5px;background:#ff0000"></div>
<div class="a t" style="left:271px;top:597px;font-size:11px;line-height:16px;letter-spacing:-0.3px;color:#000">RDBMS: MS SQL Server 2000</div>
<div class="a t" style="left:271px;top:610.5px;font-size:11px;line-height:16px;letter-spacing:-0.3px;color:#000">Tables: 27</div>
<div class="a t" style="left:271px;top:624.5px;font-size:11px;line-height:16px;letter-spacing:-0.3px;color:#000">Views: 18</div>
<div class="a t" style="left:271px;top:638.5px;font-size:11px;line-height:16px;letter-spacing:-0.3px;color:#000">Relationships: 16</div>
</body></html>
